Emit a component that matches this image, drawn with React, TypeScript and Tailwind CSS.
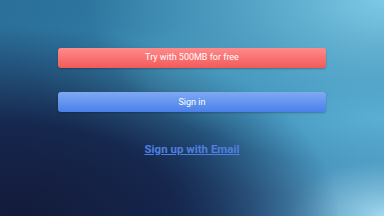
export default function App() {
  return (
    <div className="relative h-[216px] w-[384px] overflow-hidden bg-[#2a6f98] font-['Roboto',sans-serif]">
      <div className="absolute inset-0 bg-[radial-gradient(ellipse_at_100%_0%,#7cc9e6_0%,rgba(110,195,225,0.6)_25%,rgba(60,150,190,0)_55%),radial-gradient(ellipse_at_5%_100%,#131b3a_0%,rgba(20,32,70,0.9)_30%,rgba(25,60,110,0)_62%),radial-gradient(ellipse_at_100%_100%,#a0d8ee_0%,rgba(100,185,220,0.6)_18%,rgba(40,90,140,0)_42%),radial-gradient(ellipse_at_100%_55%,rgba(80,170,210,0.85)_0%,rgba(60,150,195,0.5)_25%,rgba(40,110,160,0)_50%),radial-gradient(ellipse_at_40%_40%,#3f96b8_0%,rgba(50,130,170,0.6)_35%,rgba(30,80,130,0)_70%),linear-gradient(180deg,#2a6e98_0%,#1c4a7c_100%)]" />
      <div className="relative flex flex-col items-center pt-[48px]">
        <button className="flex h-[20px] w-[268px] items-center justify-center rounded-[3px] bg-[linear-gradient(180deg,#ff8a8a_0%,#f25a5a_100%)] text-[9px] text-white shadow-[0_1px_2px_rgba(0,0,0,0.25)]">
          Try with 500MB for free
        </button>
        <button className="mt-[24px] flex h-[20px] w-[268px] items-center justify-center rounded-[3px] bg-[linear-gradient(180deg,#7fa9f2_0%,#4a80ea_100%)] pt-[1px] text-[9px] text-white shadow-[0_1px_2px_rgba(0,0,0,0.25)]">
          Sign in
        </button>
        <a className="mt-[29px] text-[11.5px] font-bold text-[#4f7fe0] underline">
          Sign up with Email
        </a>
      </div>
    </div>
  );
}
